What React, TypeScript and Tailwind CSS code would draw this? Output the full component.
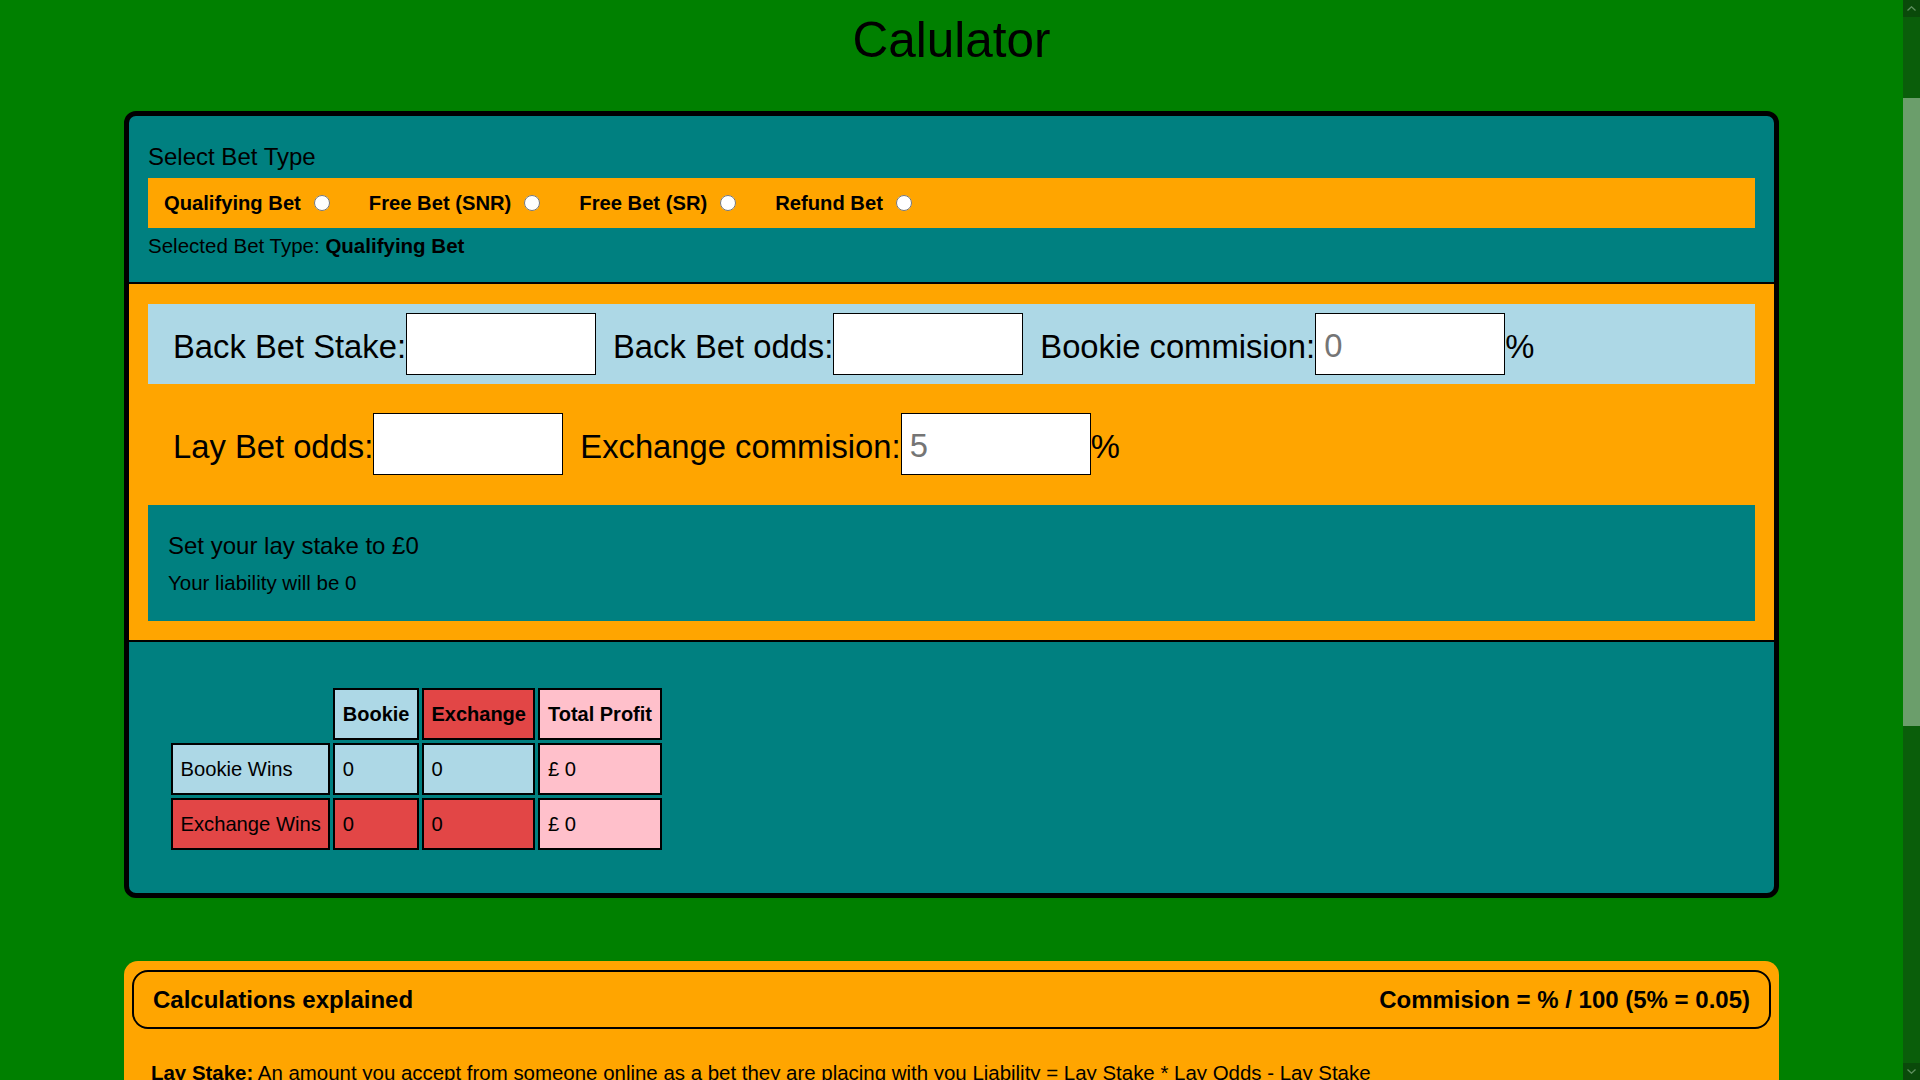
const betTypes = ["Qualifying Bet", "Free Bet (SNR)", "Free Bet (SR)", "Refund Bet"]

function NumberField({ label, placeholder, percent }: { label: string; placeholder?: string; percent?: boolean }) {
    return (
        <div className="flex items-center">
            <span className="pt-[5px]">{label}</span>
            <input
                type="text"
                placeholder={placeholder}
                className="w-[190px] h-[62px] bg-white border border-black pl-2 pt-[4px] text-[32.75px] outline-none placeholder:text-[#757575]"
            />
            {percent && <span className="pt-[5px]">%</span>}
        </div>
    )
}

function ScrollArrow({ up }: { up?: boolean }) {
    return (
        <div className="h-[17px] bg-[#0a4a0a] flex items-center justify-center">
            <svg width="9" height="5" viewBox="0 0 9 5">
                <path
                    d={up ? "M0.5 4.5 L4.5 0.8 L8.5 4.5" : "M0.5 0.5 L4.5 4.2 L8.5 0.5"}
                    fill="none"
                    stroke="#5f8f5f"
                    strokeWidth="1.3"
                />
            </svg>
        </div>
    )
}

const cell = "border-2 border-black px-[7.5px] py-3 text-left"
const head = "border-2 border-black px-[7.5px] py-3 font-bold"

export default function App() {
    return (
        <div className="flex h-screen overflow-hidden bg-[#008000] text-black font-['Liberation_Sans',Arial,sans-serif]">
            <div className="flex-1 min-w-0 overflow-hidden">
                <div className="pt-[12px]">
                    <h1 className="text-center text-[49.5px] leading-[55px] font-normal">Calulator</h1>

                    <div className="mx-[124px] mt-[44px] border-[5px] border-black rounded-[12px] bg-[#008080] overflow-hidden">
                        {/* bet type */}
                        <div className="px-[19px] pt-[27px] pb-[25px]">
                            <p className="text-[24px] leading-[28px]">Select Bet Type</p>
                            <div className="mt-[7px] h-[50px] bg-[#ffa500] flex items-center pl-4 text-[20.2px] font-bold">
                                {betTypes.map((t, i) => (
                                    <label key={t} className={`flex items-center ${i > 0 ? "ml-[39px]" : ""}`}>
                                        <span>{t}</span>
                                        <input type="radio" name="betType" className="ml-[13px] w-4 h-4" />
                                    </label>
                                ))}
                            </div>
                            <p className="mt-[6px] text-[20.5px] leading-[23px]">
                                Selected Bet Type: <b>Qualifying Bet</b>
                            </p>
                        </div>

                        {/* inputs */}
                        <div className="bg-[#ffa500] border-y-2 border-black px-[19px] pt-[20px] pb-[19px] text-[32.75px]">
                            <div className="h-[80px] bg-[#add8e6] flex items-center pl-[25px] gap-[17px]">
                                <NumberField label="Back Bet Stake:" />
                                <NumberField label="Back Bet odds:" />
                                <NumberField label="Bookie commision:" placeholder="0" percent />
                            </div>
                            <div className="mt-[20px] h-[80px] flex items-center pl-[25px] gap-[17px]">
                                <NumberField label="Lay Bet odds:" />
                                <NumberField label="Exchange commision:" placeholder="5" percent />
                            </div>
                            <div className="mt-[21px] bg-[#008080] px-[20px] pt-[27px] pb-[27px]">
                                <p className="text-[24px] leading-[28px]">Set your lay stake to £0</p>
                                <p className="mt-[11px] text-[20.5px] leading-[23px]">Your liability will be 0</p>
                            </div>
                        </div>

                        {/* results */}
                        <div className="px-[39px] pt-[43px] pb-[40px]">
                            <table className="border-separate border-spacing-[3px] text-[20.2px] leading-[24px]">
                                <thead>
                                    <tr className="text-[20px]">
                                        <th></th>
                                        <th className={`${head} bg-[#add8e6]`}>Bookie</th>
                                        <th className={`${head} bg-[#e24646]`}>Exchange</th>
                                        <th className={`${head} bg-[#ffc0cb]`}>Total Profit</th>
                                    </tr>
                                </thead>
                                <tbody>
                                    <tr className="bg-[#add8e6]">
                                        <td className={cell}>Bookie Wins</td>
                                        <td className={cell}>0</td>
                                        <td className={cell}>0</td>
                                        <td className={`${cell} bg-[#ffc0cb]`}>£ 0</td>
                                    </tr>
                                    <tr className="bg-[#e24646]">
                                        <td className={cell}>Exchange Wins</td>
                                        <td className={cell}>0</td>
                                        <td className={cell}>0</td>
                                        <td className={`${cell} bg-[#ffc0cb]`}>£ 0</td>
                                    </tr>
                                </tbody>
                            </table>
                        </div>
                    </div>

                    {/* explanation */}
                    <div className="mx-[124px] mt-[63px] bg-[#ffa500] rounded-[14px] pt-[9px] px-[8px] pb-[24px]">
                        <div className="h-[59px] border-2 border-black rounded-[16px] flex items-center justify-between px-[19px] text-[24px] font-bold">
                            <span>Calculations explained</span>
                            <span>Commision = % / 100 (5% = 0.05)</span>
                        </div>
                        <div className="px-[19px] text-[20.45px] leading-[23px]">
                            <p className="mt-[32px]">
                                <b>Lay Stake:</b> An amount you accept from someone online as a bet they are placing with you Liability = Lay Stake * Lay Odds - Lay Stake
                            </p>
                        </div>
                    </div>
                </div>
            </div>

            {/* page scrollbar */}
            <div className="w-[17px] flex flex-col bg-[#0a5e0a]">
                <ScrollArrow up />
                <div className="flex-1">
                    <div className="mt-[81px] h-[628px] bg-[#6b9e6b]" />
                </div>
                <ScrollArrow />
            </div>
        </div>
    )
}
